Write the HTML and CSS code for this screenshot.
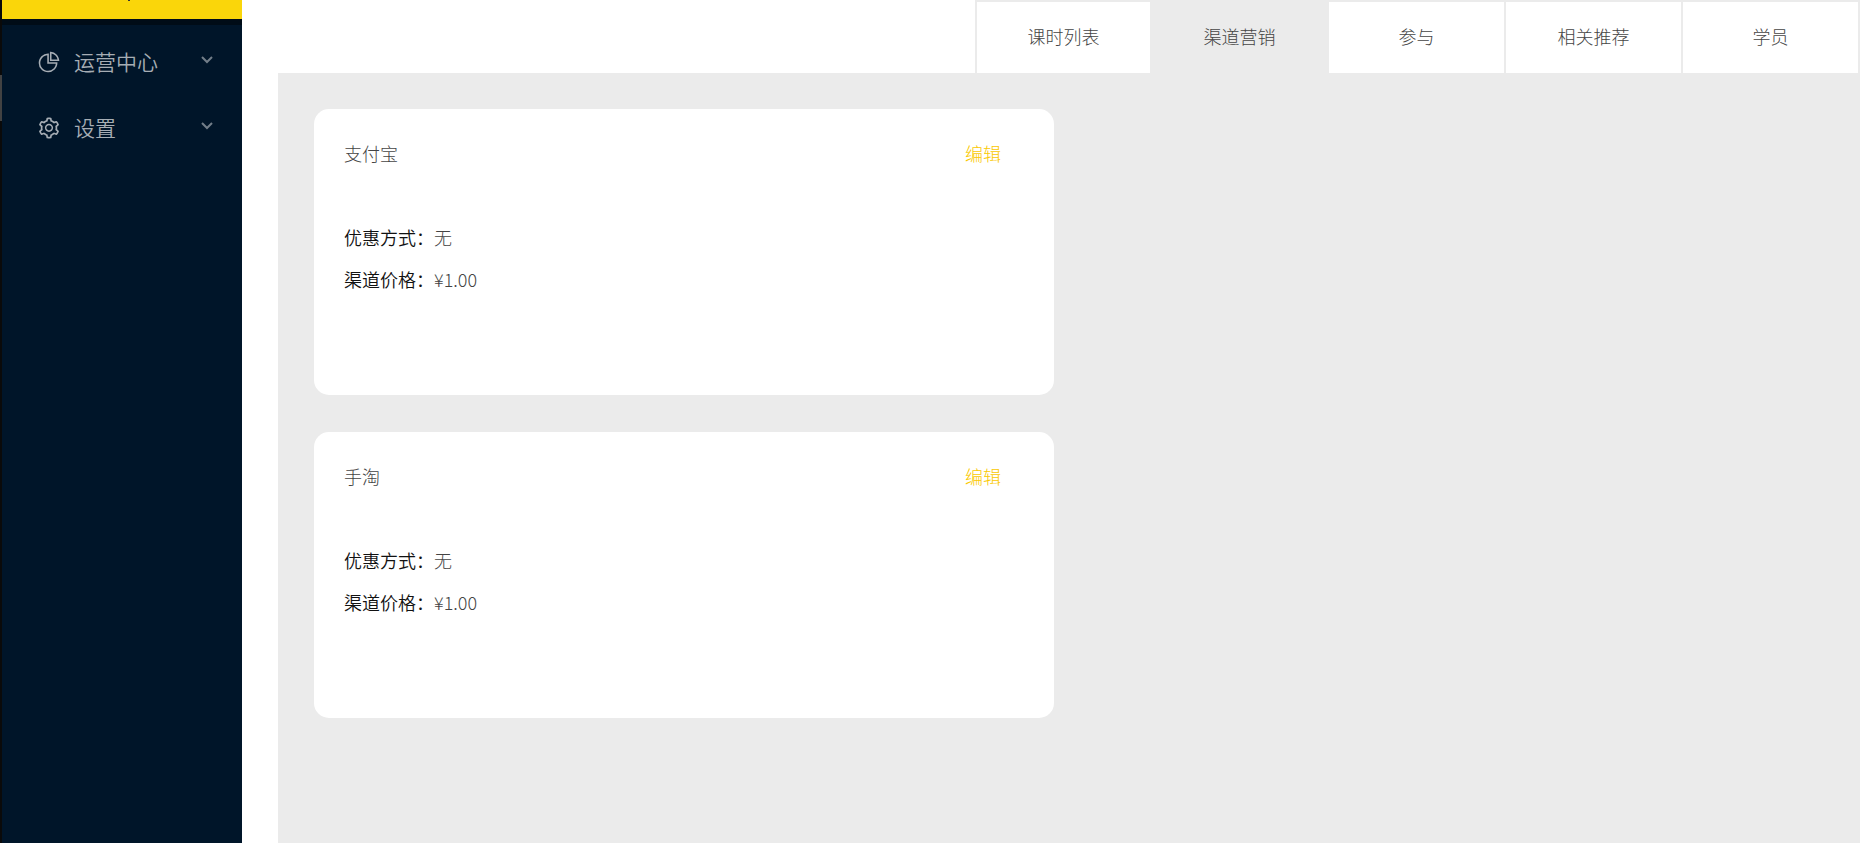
FILE: index.html
```
<!DOCTYPE html>
<html lang="zh-CN">
<head>
  <meta charset="UTF-8" />
  <meta name="viewport" content="width=device-width, initial-scale=1" />
  <title>渠道营销</title>
  <link rel="stylesheet" href="styles.css">
</head>
<body>

  <div class="layout">
    <div class="rail"><div class="rail-handle"></div></div>

    <aside class="sidebar">
      <div class="menu-active"><span class="menu-tick"></span></div>
      <div class="menu-gap"></div>
      <nav class="menu">
        <button class="menu-item" type="button">
          <svg class="menu-icon" viewBox="0 0 1024 1024" fill="currentColor" aria-hidden="true">
            <path d="M864 518H506V160c0-4.400-3.600-8-8-8h-26a398.460 398.460 0 0 0-282.800 117.100 398.190 398.190 0 0 0-85.700 127.100A397.610 397.610 0 0 0 72 552a398.460 398.460 0 0 0 117.100 282.800c36.700 36.700 79.500 65.600 127.100 85.700A397.610 397.610 0 0 0 472 952a398.460 398.460 0 0 0 282.800-117.100c36.700-36.700 65.600-79.500 85.700-127.100A397.610 397.610 0 0 0 872 552v-26c0-4.400-3.600-8-8-8zM705.700 787.800A331.590 331.590 0 0 1 470.400 884c-88.100-.4-170.900-34.900-233.200-97.200C174.500 724.100 140 640.700 140 552c0-88.700 34.500-172.100 97.200-234.800 54.600-54.600 124.900-87.900 200.800-95.500V586h364.300c-7.700 76.300-41.300 147-96.600 201.800zM952 462.400l-2.600-28.200c-8.500-92.100-49.400-179-115.200-244.600A399.400 399.400 0 0 0 589 74.600L560.700 72c-4.700-.4-8.700 3.200-8.700 7.900V464c0 4.400 3.600 8 8 8l384-1c4.700 0 8.400-4 8-8.600zm-332.200-58.200V147.600a332.240 332.240 0 0 1 166.400 89.800c45.700 45.600 77 103.600 90 166.100l-256.400.7z"/>
          </svg>
          <span class="menu-text">运营中心</span>
          <svg class="menu-arrow" viewBox="0 0 12 12" aria-hidden="true"><path d="M1 3l5 5 5-5"/></svg>
        </button>
        <button class="menu-item" type="button">
          <svg class="menu-icon" viewBox="0 0 1024 1024" fill="currentColor" aria-hidden="true">
            <path d="M924.800 625.700l-65.500-56c3.100-19 4.700-38.400 4.700-57.800s-1.600-38.800-4.700-57.800l65.500-56a32.030 32.030 0 0 0 9.300-35.200l-.9-2.600a443.740 443.740 0 0 0-79.700-137.900l-1.800-2.100a32.120 32.120 0 0 0-35.100-9.500l-81.300 28.900c-30-24.600-63.500-44-99.700-57.600l-15.700-85a32.050 32.050 0 0 0-25.800-25.700l-2.700-.5c-52.100-9.400-106.900-9.400-159 0l-2.700.5a32.050 32.050 0 0 0-25.800 25.700l-15.800 85.400a351.860 351.860 0 0 0-99 57.400l-81.900-29.100a32 32 0 0 0-35.100 9.500l-1.800 2.100a446.020 446.020 0 0 0-79.700 137.900l-.9 2.600c-4.500 12.500-.8 26.500 9.300 35.200l66.300 56.600c-3.100 18.800-4.600 38-4.600 57.100 0 19.200 1.500 38.400 4.600 57.100L99 625.500a32.030 32.030 0 0 0-9.300 35.200l.9 2.600c18.100 50.400 44.900 96.900 79.700 137.900l1.800 2.100a32.120 32.120 0 0 0 35.100 9.500l81.900-29.100c29.800 24.500 63.100 43.900 99 57.400l15.800 85.400a32.050 32.050 0 0 0 25.800 25.700l2.700.5a449.400 449.400 0 0 0 159 0l2.700-.5a32.050 32.050 0 0 0 25.800-25.700l15.700-85a350 350 0 0 0 99.700-57.600l81.300 28.900a32 32 0 0 0 35.100-9.500l1.800-2.100c34.800-41.100 61.600-87.500 79.700-137.900l.9-2.600c4.500-12.300.8-26.300-9.300-35zM788.300 465.900c2.500 15.100 3.800 30.600 3.800 46.100s-1.300 31-3.800 46.100l-6.600 40.100 74.700 63.900a370.030 370.030 0 0 1-42.600 73.600L721 702.800l-31.400 25.800c-23.900 19.600-50.500 35-79.300 45.800l-38.100 14.300-17.900 97a377.500 377.500 0 0 1-85 0l-17.900-97.200-37.800-14.500c-28.500-10.800-55-26.200-78.700-45.700l-31.400-25.900-93.400 33.200c-17-22.900-31.200-47.600-42.600-73.600l75.500-64.500-6.500-40c-2.400-14.900-3.700-30.300-3.700-45.500 0-15.300 1.200-30.600 3.700-45.500l6.500-40-75.500-64.500c11.300-26.100 25.600-50.700 42.600-73.600l93.400 33.200 31.400-25.900c23.700-19.500 50.200-34.900 78.700-45.700l37.900-14.300 17.900-97.200c28.100-3.200 56.800-3.200 85 0l17.900 97 38.100 14.300c28.700 10.800 55.400 26.200 79.300 45.800l31.400 25.800 92.800-32.900c17 22.900 31.200 47.600 42.600 73.600L781.800 426l6.500 39.900zM512 326c-97.200 0-176 78.800-176 176s78.800 176 176 176 176-78.800 176-176-78.800-176-176-176zm79.200 255.200A111.600 111.600 0 0 1 512 614c-29.900 0-58-11.700-79.200-32.800A111.600 111.600 0 0 1 400 502c0-29.900 11.700-58 32.800-79.200C454 401.600 482.100 390 512 390c29.900 0 58 11.600 79.200 32.800A111.600 111.600 0 0 1 624 502c0 29.900-11.700 58-32.800 79.200z"/>
          </svg>
          <span class="menu-text">设置</span>
          <svg class="menu-arrow" viewBox="0 0 12 12" aria-hidden="true"><path d="M1 3l5 5 5-5"/></svg>
        </button>
      </nav>
    </aside>

    <main class="main">
      <nav class="tabs">
        <button class="tab" type="button">课时列表</button>
        <button class="tab active" type="button">渠道营销</button>
        <button class="tab" type="button">参与</button>
        <button class="tab" type="button">相关推荐</button>
        <button class="tab" type="button">学员</button>
      </nav>

      <div class="content">
        <section class="card">
          <div class="card-header">
            <span>支付宝</span>
            <a class="edit" href="#">编辑</a>
          </div>
          <p class="row"><span class="label">优惠方式：</span>无</p>
          <p class="row"><span class="label">渠道价格：</span>¥1.00</p>
        </section>

        <section class="card">
          <div class="card-header">
            <span>手淘</span>
            <a class="edit" href="#">编辑</a>
          </div>
          <p class="row"><span class="label">优惠方式：</span>无</p>
          <p class="row"><span class="label">渠道价格：</span>¥1.00</p>
        </section>
      </div>
    </main>
  </div>

</body>
</html>
```

FILE: styles.css
```
* {
  box-sizing: border-box;
  margin: 0;
  padding: 0;
}

body {
  font-family: "Noto Sans CJK SC", sans-serif;
  font-size: 18px;
  font-weight: 300;
  color: #444;
  background: #fff;
}

button {
  font: inherit;
  border: none;
  cursor: pointer;
}

.layout {
  display: flex;
  min-height: 100vh;
}

/* sidebar */
.rail {
  width: 2px;
  padding-top: 75px;
  background: #0a0a0a;
}

.rail-handle {
  height: 46px;
  background: #424242;
}

.sidebar {
  width: 240px;
  background: #001529;
}

.menu-active {
  height: 19px;
  padding-left: 126px;
  background: #fad60a;
}

.menu-tick {
  display: block;
  width: 2px;
  height: 1px;
  background: #333;
}

.menu-gap {
  height: 6px;
  background: #000c17;
}

.menu {
  padding-top: 4px;
}

.menu-item {
  display: flex;
  align-items: center;
  width: 100%;
  height: 66px;
  padding: 0 29px 0 35px;
  font-size: 21px;
  font-weight: 350;
  text-align: left;
  color: #a6adb4;
  background: none;
}

.menu-icon {
  width: 24px;
  height: 24px;
  margin-right: 13px;
}

.menu-text {
  flex: 1;
  padding-bottom: 2px;
}

.menu-arrow {
  width: 12px;
  height: 12px;
  margin-bottom: 4px;
  fill: none;
  stroke: #727e89;
  stroke-width: 2;
}

/* main */
.main {
  flex: 1;
  display: flex;
  flex-direction: column;
  padding: 0 4px 0 36px;
}

.tabs {
  display: flex;
  justify-content: flex-end;
}

.tab {
  width: 177px;
  height: 73px;
  padding-bottom: 4px;
  border-top: 2px solid #ebebeb;
  border-right: 2px solid #ebebeb;
  color: #444;
  background: #fff;
}

.tab:first-child {
  border-left: 2px solid #ebebeb;
}

.tab.active {
  background: #ebebeb;
}

.content {
  flex: 1;
  display: flex;
  flex-direction: column;
  gap: 37px;
  padding: 36px;
  background: #ebebeb;
}

.card {
  width: 100%;
  max-width: 740px;
  min-height: 286px;
  padding: 29px 30px;
  border-radius: 15px;
  background: #fff;
}

.card-header {
  display: flex;
  justify-content: space-between;
  padding-right: 23px;
  margin-bottom: 54px;
  line-height: 30px;
}

.edit {
  color: #fac800;
  text-decoration: none;
}

.row {
  margin-bottom: 12px;
  line-height: 30px;
}

.label {
  font-weight: 350;
  color: #111;
}
```
